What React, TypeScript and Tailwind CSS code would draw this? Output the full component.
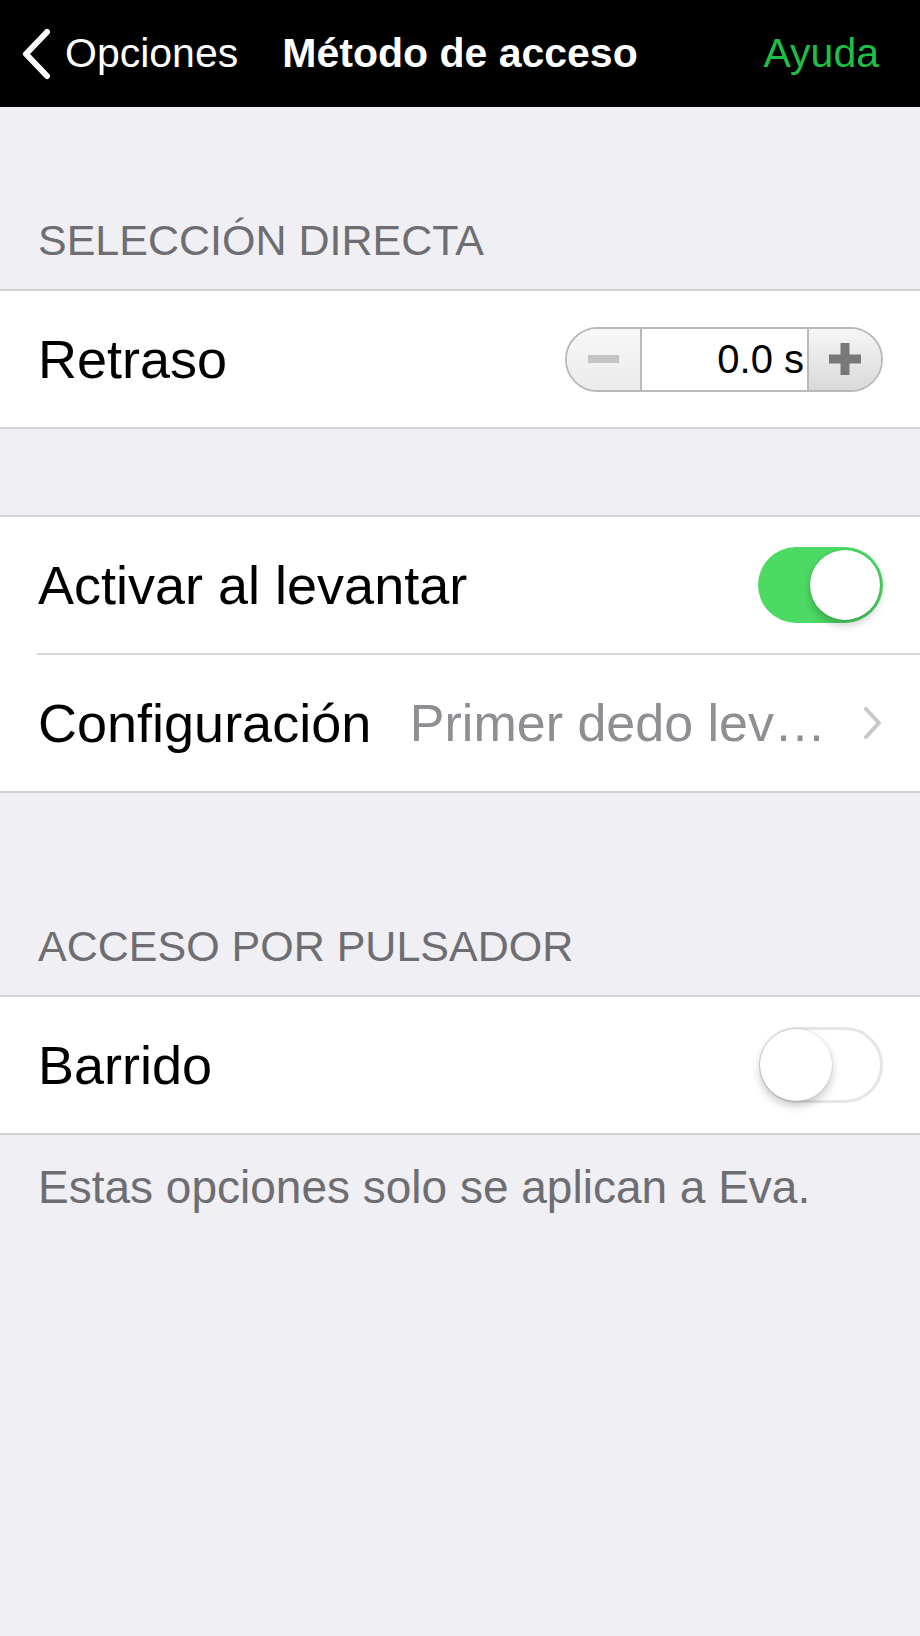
import type { ReactNode } from "react";

const font = { fontFamily: '"Liberation Sans", Arial, sans-serif' };

export default function App() {
  return (
    <div className="min-h-[1636px] w-full bg-[#efeff4]" style={font}>
      <NavBar />

      <SectionHeader height="h-[182px]">SELECCIÓN DIRECTA</SectionHeader>
      <Group>
        <Row label="Retraso">
          <Stepper value="0.0 s" />
        </Row>
      </Group>

      <div className="h-[86px]" />

      <Group>
        <Row label="Activar al levantar">
          <Toggle on />
        </Row>
        <div className="ml-[37px] h-[2px] bg-[#d6d6da]" />
        <Row label="Configuración">
          <span className="ml-auto whitespace-nowrap text-[52px] leading-none text-[#8e8e93]">
            Primer dedo lev…
          </span>
          <svg className="ml-[37px] shrink-0" width="20" height="32" viewBox="0 0 20 32" fill="none">
            <path
              d="M3 2 L16 16 L3 30"
              stroke="#c7c7cc"
              strokeWidth="4"
              strokeLinecap="round"
              strokeLinejoin="round"
            />
          </svg>
        </Row>
      </Group>

      <SectionHeader height="h-[202px]">ACCESO POR PULSADOR</SectionHeader>
      <Group>
        <Row label="Barrido">
          <Toggle />
        </Row>
      </Group>

      <p className="pl-[38px] pt-[29px] text-[46px] leading-none text-[#6d6d72]">
        Estas opciones solo se aplican a Eva.
      </p>
    </div>
  );
}

function NavBar() {
  return (
    <header className="grid h-[107px] grid-cols-[1fr_auto_1fr] items-center bg-black text-[41px] leading-none">
      <div className="flex items-center pl-[20px] text-white">
        <svg width="32" height="52" viewBox="0 0 32 52" fill="none">
          <path
            d="M27 4 L6 26 L27 48"
            stroke="white"
            strokeWidth="6"
            strokeLinecap="round"
            strokeLinejoin="round"
          />
        </svg>
        <span className="ml-[13px]">Opciones</span>
      </div>
      <h1 className="font-bold text-white">Método de acceso</h1>
      <div className="flex justify-end pr-[41px] text-[#1fbf45]">Ayuda</div>
    </header>
  );
}

function SectionHeader({ height, children }: { height: string; children: ReactNode }) {
  return (
    <div className={`${height} flex items-end pb-[27px] pl-[38px]`}>
      <span className="text-[43px] leading-none text-[#6d6d72]">{children}</span>
    </div>
  );
}

function Group({ children }: { children: ReactNode }) {
  return <div className="border-y-2 border-[#d1d1d6] bg-white">{children}</div>;
}

function Row({ label, children }: { label: string; children?: ReactNode }) {
  return (
    <div className="flex h-[136px] items-center pl-[38px] pr-[37px]">
      <span className="whitespace-nowrap text-[54px] leading-none text-black">{label}</span>
      <div className="ml-auto flex items-center">{children}</div>
    </div>
  );
}

function Stepper({ value }: { value: string }) {
  return (
    <div className="flex h-[65px] w-[318px] overflow-hidden rounded-full border-2 border-[#b9b9b9]">
      <div className="flex w-[75px] items-center justify-center border-r-2 border-[#b9b9b9] bg-gradient-to-b from-[#f8f8f8] to-[#ebebeb]">
        <div className="h-[8px] w-[31px] bg-[#c4c4c4]" />
      </div>
      <div className="flex flex-1 items-center justify-end bg-white pr-[3px] text-[40px] leading-none text-black">
        {value}
      </div>
      <div className="flex w-[74px] items-center justify-center border-l-2 border-[#b9b9b9] bg-gradient-to-b from-[#f6f6f6] to-[#d9d9d9]">
        <svg width="32" height="32" viewBox="0 0 32 32">
          <rect x="0" y="11.5" width="32" height="9" fill="#787878" />
          <rect x="11.5" y="0" width="9" height="32" fill="#787878" />
        </svg>
      </div>
    </div>
  );
}

function Toggle({ on }: { on?: boolean }) {
  if (on) {
    return (
      <div className="flex h-[76px] w-[125px] items-center justify-end rounded-full bg-[#4cd964] p-[3px]">
        <div className="h-[70px] w-[70px] rounded-full bg-white shadow-[0_5px_8px_rgba(0,0,0,0.22),0_0_0_1px_rgba(0,0,0,0.05)]" />
      </div>
    );
  }
  return (
    <div className="flex h-[76px] w-[124px] items-center rounded-full border-[3px] border-[#e5e5ea] bg-white">
      <div className="-ml-[2px] h-[72px] w-[72px] rounded-full bg-white shadow-[0_5px_10px_rgba(0,0,0,0.22),0_0_0_1px_rgba(0,0,0,0.06)]" />
    </div>
  );
}
